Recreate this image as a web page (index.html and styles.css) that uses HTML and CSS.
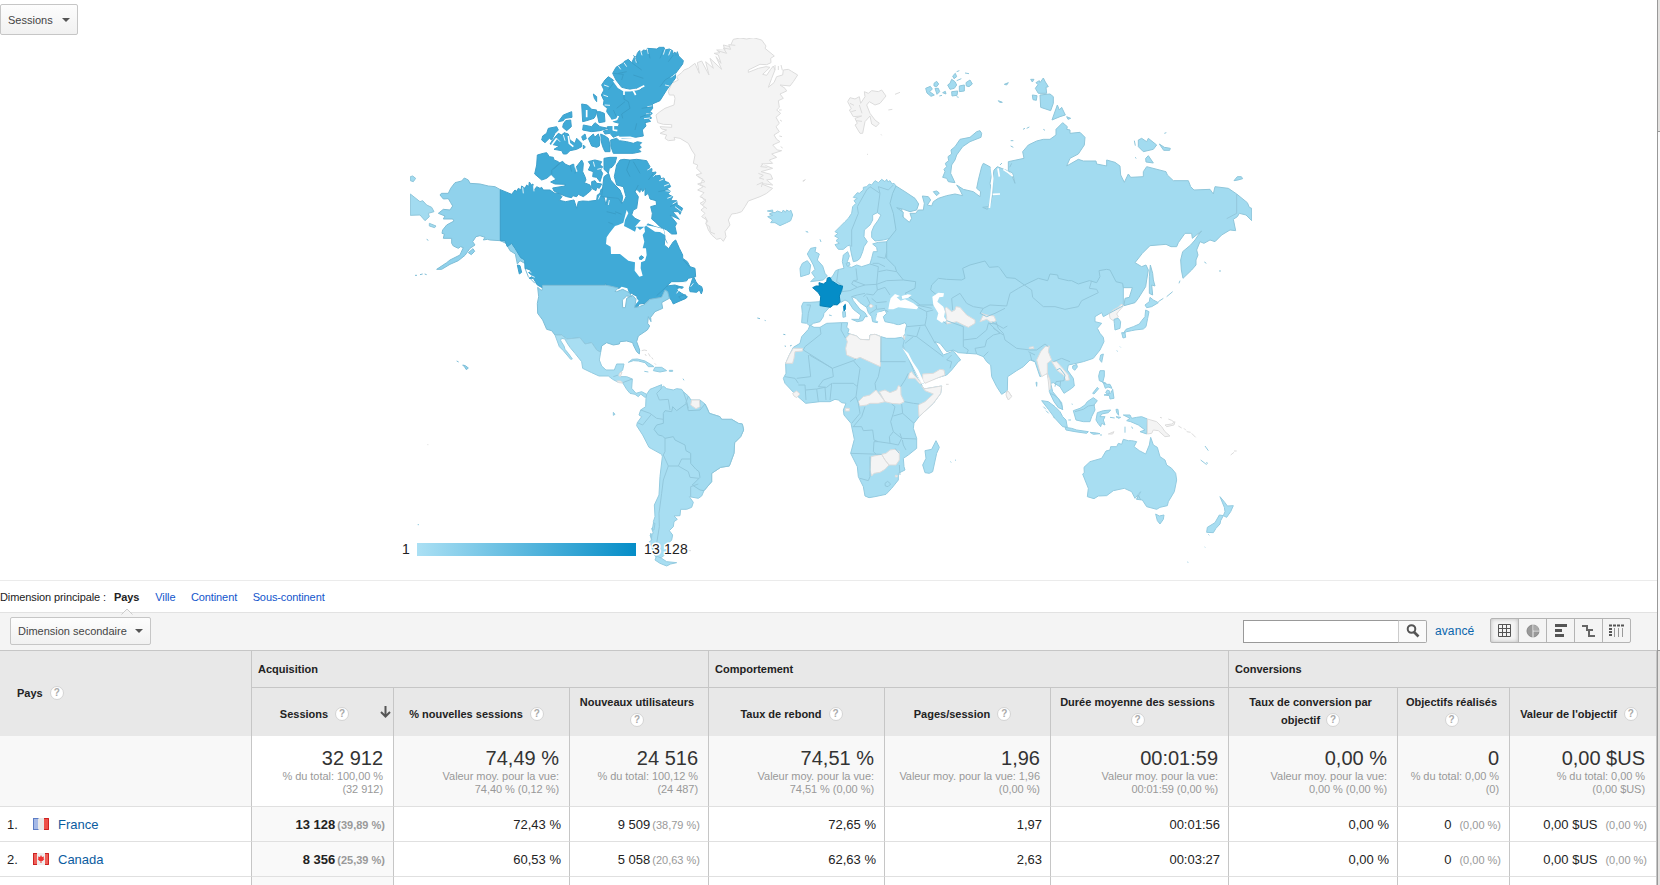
FILE: index.html
```html
<!DOCTYPE html>
<html lang="fr">
<head>
<meta charset="utf-8">
<title>Pays</title>
<link rel="stylesheet" href="styles.css">
</head>
<body>
<div class="page">
<main class="report">
<section class="map-panel">
<svg class="map" width="1657" height="580" viewBox="0 0 1657 580">
<defs>
<linearGradient id="scale"><stop offset="0" stop-color="#abe0f4"/><stop offset="1" stop-color="#058dc7"/></linearGradient>
<clipPath id="frame"><rect x="410" y="38" width="842" height="530"/></clipPath>
</defs>
<g clip-path="url(#frame)">
<!-- North America (north) and Greenland -->
<g transform="translate(400 30) scale(.33333)">
<path class="none" d="M1000,28L1020,24 1040,27 1060,23 1085,30 1098,48 1095,55 1123,78 1112,85 1113,98 1100,104 1080,103 1045,120 1045,127 1075,115 1098,110 1110,112 1088,133 1100,136 1112,118 1120,108 1125,120 1115,145 1105,172 1122,158 1130,140 1148,135 1150,120 1165,118 1175,124 1193,135 1180,155 1170,168 1140,165 1155,175 1160,183 1140,192 1150,205 1135,212 1138,232 1130,240 1142,250 1128,262 1138,280 1128,290 1138,305 1122,315 1130,328 1140,335 1118,345 1132,360 1145,362 1115,372 1130,382 1108,390 1118,400 1085,402 1118,415 1083,425 1112,433 1118,447 1100,450 1118,465 1080,460 1118,475 1100,490 1080,500 1045,513 1035,530 1025,545 1010,550 995,552 985,570 990,585 975,605 978,620 970,634 962,625 950,628 935,615 925,600 918,580 920,570 905,560 915,550 903,540 915,530 900,520 918,510 900,500 912,488 893,480 910,470 893,462 915,455 888,435 905,430 890,415 893,405 880,400 885,375 875,360 865,340 840,325 822,322 825,330 805,332 795,325 800,315 780,310 800,300 785,297 780,290 815,292 815,284 790,283 773,278 768,255 780,245 795,235 822,225 825,205 822,195 808,195 805,185 815,160 835,150 830,140 845,128 852,120 865,115 885,100 898,130 892,98 905,93 927,135 917,95 940,115 930,85 965,118 948,80 963,100 955,75 942,70 960,68 950,60 975,60 970,45 990,50Z"/>
<path class="none thin" d="M1137,240l8,0M1140,270l6,4M1138,318l8,2M1142,350l6,4M1125,105v15M1135,108v12M1143,105l4,16M1210,455l6,-6M952,62l28,8 -10,-16 22,4 -6,-14 20,2M1090,400l-8,10 20,2M1075,430l15,6 -12,8 14,4M1070,465l18,-8 -4,14M905,500l12,14 -10,12 14,10M915,560l8,14 -6,8 12,8 2,16 14,6M895,440l14,8 -8,16 16,8"/>
<path class="us" d="M301,479L285,470 265,468 240,462 210,460 205,450 193,444 185,453 165,458 152,475 145,490 124,490 120,495 130,507 145,506 152,518 158,528 150,540 130,538 115,550 135,558 130,567 158,567 162,573 140,585 128,600 126,610 133,612 130,625 155,625 155,640 160,648 175,655 182,650 190,653 183,668 180,675 150,690 140,698 110,718 125,718 150,703 175,692 195,676 210,655 225,645 218,635 228,620 240,617 255,622 250,630 262,628 270,630 300,632 318,632 322,648 335,638 342,650 362,672 363,683 375,684 374,700 360,692 352,702 346,672 330,662 318,640 301,632Z"/>
<path class="us thin" d="M205,668l14,-12 5,8 -10,10zM45,736l6,0M60,734l8,-2M74,732l6,2M80,628l5,3"/>
<path class="ru" d="M31,492L60,515 68,512 80,525 95,532 102,545 85,550 88,560 75,572 60,555 31,556ZM31,440L38,438 47,445 40,455 31,452ZM88,580L108,588 104,593 88,588Z"/>
<path class="ca" d="M301,479L335,493 345,480 350,484 355,475 363,480 365,468 375,475 380,465 386,470 388,456 394,465 399,462 402,482 410,470 420,475 425,472 430,480 450,480 463,489 478,491 486,500 478,511 497,515 522,510 530,535 535,515 548,513 565,514 590,511 592,495 600,490 603,478 610,475 612,500 618,525 625,490 640,498 655,490 665,520 671,515 678,500 670,470 650,465 643,440 650,405 660,390 672,388 690,390 710,388 740,392 750,410 745,417 756,416 755,428 768,426 765,438 780,436 782,446 792,444 795,454 806,458 812,470 800,476 812,484 803,492 818,500 812,512 830,512 832,524 848,535 840,553 835,545 818,545 838,568 810,555 830,580 825,590 830,612 815,612 800,600 780,590 765,575 755,567 757,550 752,530 770,525 768,512 750,507 745,490 735,497 735,475 728,485 722,475 720,487 710,478 705,485 715,500 710,535 700,540 695,555 705,565 720,572 735,578 765,590 790,597 795,620 793,645 806,656 820,635 827,630 838,655 848,675 848,685 862,695 870,710 885,715 887,740 865,745 858,755 815,755 800,768 825,765 838,770 830,780 845,790 862,800 858,805 828,818 820,822 815,812 806,800 803,788 795,780 785,800 770,806 750,806 735,820 718,822 712,832 702,832 706,815 712,800 695,790 685,797 668,780 655,775 664,775 645,772 618,765 617,760 614,766 428,766 430,775 412,765 400,745 388,745 398,738 386,728 392,720 375,715 374,690 362,683 345,655 335,640 322,650 315,632 301,632Z"/>
<path class="sea" d="M680,540L676,555 670,578 655,585 645,588 628,610 620,622 618,642 632,650 633,672 660,672 685,692 705,697 704,722 718,740 728,737 722,715 723,697 735,692 740,675 738,655 728,655 733,635 728,615 735,605 733,590 720,600 710,590 705,605 690,597 672,588 675,570 685,550Z"/>
<path class="sea" d="M645,794L650,782 665,770 682,775 686,787ZM668,830L668,808 676,797 700,797 690,804 682,803 677,815 676,832ZM695,800L706,800 716,812 705,825ZM735,585L765,590 790,597 795,615 780,606 765,605ZM705,590L725,568 745,578 735,590Z"/>
<path class="ca" d="M868,775L878,745 882,742 888,755 895,765 905,770 908,780 904,792 898,780 890,787 870,785ZM836,800l20,-6 3,10 -15,6zM718,682l6,-5 7,5 -5,6 -7,0zM352,705l8,2 5,20 -7,5zM830,768l20,3 -3,4 -16,-2z"/>
<path class="ca" d="M638,130L648,112 668,100 672,95 685,88 695,98 705,78 708,84 712,70 718,62 726,66 730,60 740,62 742,55 770,57 778,52 792,52 795,60 808,57 818,62 818,72 825,66 828,76 832,65 836,78 850,92 848,102 827,130 826,145 800,180 780,212 757,222 758,235 750,245 757,250 748,258 755,264 745,268 752,274 735,278 738,288 727,300 730,318 700,323 665,325 655,315 640,322 630,310 615,312 610,303 625,300 622,290 655,290 658,280 640,275 632,262 620,245 622,235 610,225 612,212 604,195 612,180 605,165 615,150 625,140 640,150 655,175 672,182 690,183 720,180 732,168 715,175 690,178 665,172 648,150Z"/>
<path class="ca" d="M632,330L650,325 658,332 680,335 700,340 712,335 725,338 718,345 724,352 716,358 723,365 700,370 640,370 633,350ZM412,375L430,370 440,368 448,380 460,382 462,390 475,395 480,400 455,420 455,432 440,445 425,450 404,432 410,405ZM480,398L488,394 495,402 508,408 520,402 528,412 545,390 550,400 548,425 555,440 558,450 553,458 570,465 574,480 563,490 550,500 535,493 530,500 518,497 515,503 500,500 480,492 462,483 458,474 495,468 495,463 465,462 452,456 468,448 455,435 455,420ZM565,395L575,392 585,390 605,395 600,405 608,410 602,420 608,430 600,455 590,442 578,440 580,425 565,420 572,405ZM612,385L630,382 650,382 645,400 636,412 628,415 625,430 612,418ZM575,455L585,452 590,460 605,462 598,475 590,472 588,482 575,475ZM612,440L626,430 632,450 648,468 660,480 668,500 665,520 655,505 605,500 608,470Z"/>
<path class="ca" d="M450,342L458,330 475,310 485,315 492,308 505,312 510,330 525,340 530,325 545,340 545,350 530,358 510,362 500,372 490,372 485,362 462,358 478,348ZM425,330L428,318 440,310 445,295 470,290 475,300 465,310 455,330 448,325 435,338ZM475,275L490,255 515,245 516,262 495,265 490,272ZM490,282L497,272 512,270 514,290 500,302 488,292ZM545,222L562,225 575,238 590,240 588,255 582,265 560,272 548,275ZM590,245L600,245 613,250 615,275 597,278ZM548,300L550,285 575,290 585,278 600,290 625,295 600,302 575,305ZM565,325L580,312 584,322 595,312 600,328 598,348 590,352 575,348ZM602,312L615,318 625,325 630,345 630,365 615,365 610,355 605,340ZM580,192L590,200 590,215 583,205ZM545,320l10,-8 4,14 -10,5zM550,345l6,6 -6,6z"/>
<path class="sea-line" d="M641,152L655,172 672,182 690,182 712,178 733,167M700,182L707,195M672,182V195M455,345L470,325M505,318L508,340 520,350M625,275L650,268 655,258M640,285V300L652,302M655,323L690,322 722,330M560,240V262M525,405L530,425"/>
<path class="nick" d="M705,80L709,98M722,62L726,76M742,56L745,72M795,58L790,74M812,60L806,76M655,108L662,118M672,98L680,110M827,132L812,142M808,168L795,165M610,195L624,200M612,165L626,170M614,225L630,226M757,228L742,230M752,250L738,252M750,264L732,266M752,415L742,420M770,430L760,440M790,447L778,452M808,462L792,468M812,484L796,482M815,500L802,505M830,515L818,522M845,545L825,530M370,490L368,472M402,484L400,466M580,395L584,410M605,415L592,418M575,495L580,510M570,500L556,508M595,508L600,496M628,510L625,525M490,315L495,332M470,325L480,335M860,755L838,760M880,760L872,770M840,775L830,790M395,738L404,742M385,722L394,728"/>
<path class="ca-line" d="M640,130L670,133 665,150M655,130L680,125M695,98L725,120M700,135L730,145M672,195V208L685,215 690,235 665,252 668,265M820,135L795,150 780,170M675,215L650,235M757,230L725,235M750,250L720,262M690,390L680,420 690,440M705,485L715,465M770,797L805,765M620,545L648,552M625,577L640,583M645,545L665,553M700,395L720,430M760,430L745,450M800,480L775,485M830,520L810,530M530,408L525,430M510,405L515,425M480,400L460,418M640,160L625,180M700,75L715,100M745,60L750,85M790,60L780,85M820,75L805,95M710,280L705,300M640,240L650,262M795,625L802,640M850,690L870,712M375,715L385,740 405,760"/>
<path class="lt" d="M1102,543L1118,540 1118,548 1108,552 1118,556 1103,560 1118,570 1112,578 1125,578 1140,587 1160,578 1172,572 1178,555 1172,540 1168,545 1160,540 1156,547 1150,540 1146,548 1132,543 1125,548Z"/>
<path class="lt thin" d="M1220,603l4,4"/>
</g>
<!-- Central and South America -->
<g transform="translate(400 260) scale(.33333)">
<path class="us" d="M428,76L618,76 630,78 655,84 645,94 650,95 668,88 688,98 695,110 680,108 667,120 668,143 676,143 680,115 698,106 708,118 704,143 718,140 735,133 750,118 785,112 795,90 803,95 808,115 795,122 785,128 788,145 765,155 752,172 753,185 745,170 743,190 749,198 742,210 715,228 710,245 719,270 718,282 710,275 700,255 698,248 680,243 660,245 658,252 640,255 620,248 605,258 602,277 590,270 575,248 555,252 540,233 500,237 485,225 465,225 455,212 440,208 428,180 413,160 412,130 416,110 413,82 425,92 427,85Z"/>
<path class="us" d="M188,315l8,2 9,7 -6,5 -5,-8zM170,303l6,3"/>
<path class="lt" d="M465,225L485,225 500,237 540,233 555,252 575,248 590,270 602,277 598,300 605,318 618,330 643,330 650,312 672,312 668,330 658,340 660,350 680,350 697,357 695,385 708,400 725,395 740,403 748,408 735,412 722,402 715,410 705,403 690,400 680,388 668,368 655,367 638,358 625,348 597,348 575,338 548,325 545,305 525,280 510,262 500,247 495,237 484,235 482,242 492,258 495,268 505,280 517,297 512,298 490,272 478,260Z"/>
<path class="none" d="M660,338l6,-2 -5,14 -5,-4zM650,363l12,0 6,6 -12,-1z"/>
<path class="lt" d="M685,307L697,298 712,297 735,303 750,312 762,320 745,320 735,308 715,303 700,302ZM765,322L785,322 800,332 780,336 760,332ZM808,331l10,0 0,3 -10,0zM733,334l12,2M849,356l3,5M640,457l5,6 -5,3z"/>
<path class="none thin" d="M725,272l8,-2 8,2 M735,282l4,6M745,280l6,10M755,292l4,6M764,310l4,4M22,576l8,-3M82,554l3,0M865,872l8,0"/>
<path class="lt" d="M740,403L750,388 765,382 780,376 785,374 783,385 790,378 800,386 820,390 830,386 845,388 850,395 865,408 873,420 900,420 915,432 922,445 928,460 960,470 965,478 995,478 1015,490 1027,492 1031,510 1022,530 1004,548 1002,580 988,618 962,622 935,640 935,665 912,692 905,708 895,715 868,710 880,727 875,742 860,748 842,748 840,767 822,768 832,778 822,785 820,800 808,812 818,825 815,840 800,855 800,880 785,892 770,895 760,880 755,860 748,845 756,840 750,825 760,820 755,805 762,800 760,785 765,770 763,735 777,705 780,650 787,590 785,583 747,562 728,525 710,497 712,488 725,470 717,465 722,450 737,440 738,415Z"/>
<path class="br" d="M818,440L830,452 860,430 865,452 900,450 915,432 928,460 960,470 965,478 995,478 1015,490 1027,492 1031,510 1022,530 1004,548 1002,580 988,618 962,622 935,640 935,665 912,692 900,690 877,675 900,652 897,635 888,628 872,610 872,580 858,572 855,555 825,540 820,530 795,535 787,528 775,525 762,508 770,495 790,490 790,460 795,452 815,455Z"/>
<path class="line" d="M785,385L770,400 778,420 805,418 810,450M850,395L860,425 865,445M722,450L750,460 770,475 790,478M712,488L728,495 755,462M795,535L795,575 790,585 805,618 835,618 845,597 870,597M805,618L790,660 785,700 777,760 778,800 770,850M835,618L865,635 870,652 897,655M872,710L872,680 895,672M865,408L857,430M640,350L655,345M668,368L697,357M900,420V445"/>
<path class="none" d="M875,420L898,420 900,440 888,446 872,435Z"/>
<path class="lt" d="M770,888L785,895 800,905 830,908 812,912 800,918 780,910 765,900ZM760,790l5,0 -3,20 -5,0zM752,820l4,4 -2,15zM53,794l4,0"/>
<path class="us thin" d="M1072,174l8,2M1094,181l3,1M1150,223l6,1M1154,258l4,1M1170,258l5,-2"/>
</g>
<!-- Europe and Asia -->
<g transform="translate(770 50) scale(.33333)">
<path class="lt" d="M378,408L372,400 366,402 360,392 354,396 350,388 345,395 335,388 325,398 315,392 305,405 298,402 290,410 280,412 280,420 268,430 262,428 250,442 262,445 252,452 258,460 248,470 245,490 235,505 225,515 210,530 195,545 204,550 194,558 206,565 198,572 208,580 195,584 205,598 220,598 232,588 240,585 242,600 245,615 250,635 262,632 270,625 278,605 282,590 292,575 282,560 283,540 300,525 308,510 308,495 322,488 333,495 325,510 312,528 305,545 305,562 315,573 340,570 360,565 378,550 400,500Z"/>
<path class="lt" d="M355,575L325,577 308,582 320,592 322,605 310,605 305,625 300,642 275,650 260,645 245,652 235,650 232,635 238,618 233,605 220,615 217,635 222,655 208,658 197,662 190,675 180,688 165,700 150,755 120,757 100,757 95,768 97,790 95,818 110,820 120,828 130,820 150,815 160,800 162,790 180,770 208,760 225,750 235,755 250,778 272,795 268,808 245,808 262,815 278,812 285,800 292,800 285,788 270,778 250,752 245,740 258,745 270,758 290,772 295,788 305,800 308,815 322,818 325,810 318,795 330,785 345,780 350,790 340,800 345,815 370,820 385,825 405,818 410,825 405,845 400,862 395,880 403,895 415,925 430,955 445,980 458,1000 480,990 530,975 545,960 565,935 572,930 548,900 545,905 520,915 495,875 510,880 530,905 550,900 565,908 620,912 640,920 650,935 662,945 665,980 680,1010 695,1033 712,1022 713,980 740,962 760,950 780,930 795,935 810,980 830,968 838,995 838,1025 855,1055 878,1080 875,1058 848,1025 842,1000 850,998 870,1010 882,1030 905,1015 913,1008 910,985 892,960 895,945 910,942 940,935 970,925 990,900 1002,875 1000,862 990,850 982,835 995,820 975,815 975,800 995,788 1000,800 1018,790 1060,765 1060,640 700,600 400,560Z"/>
<path class="ru" d="M378,408L405,425 435,445 446,462 440,480 420,485 400,478 380,473 400,487 398,500 418,517 425,505 420,490 437,490 445,480 460,480 463,460 457,438 475,440 482,450 472,465 485,468 490,455 505,445 530,437 555,432 578,437 570,420 560,405 580,418 610,425 630,440 632,425 620,415 625,390 635,350 640,340 650,345 662,352 665,375 660,400 667,430 662,460 652,478 638,472 655,470 668,435 668,385 672,360 682,350 712,362 725,375 735,400 728,370 715,362 715,335 762,325 758,305 775,285 800,273 820,268 840,268 858,255 858,238 878,218 892,230 890,238 900,240 900,250 930,247 945,262 943,285 925,312 900,325 890,348 925,328 940,333 978,333 980,342 1010,348 1010,330 1035,337 1050,348 1052,375 1063,397 1075,372 1082,382 1120,380 1120,365 1130,350 1188,365 1192,375 1210,392 1255,392 1262,410 1272,420 1320,418 1330,432 1335,410 1375,415 1400,432 1432,458 1438,472 1445,475 1445,512 1428,495 1408,490 1402,500 1390,508 1397,542 1380,540 1355,555 1335,575 1320,570 1302,580 1290,575 1280,600 1284,615 1278,630 1278,645 1265,660 1239,685 1234,660 1232,630 1238,605 1262,585 1275,570 1285,555 1295,543 1288,548 1267,565 1265,550 1245,550 1225,578 1220,590 1203,590 1188,583 1140,587 1117,610 1095,638 1115,650 1128,645 1135,660 1130,690 1127,710 1105,745 1095,758 1062,767 1065,745 1078,742 1087,713 1060,713 1058,700 1038,695 1020,660 1010,658 987,662 990,680 980,698 958,692 925,702 905,692 895,692 865,685 863,675 840,672 833,692 805,685 763,705 735,685 710,683 690,655 685,650 658,652 645,633 600,645 578,655 585,685 575,690 530,688 505,685 485,705 482,720 500,735 490,745 495,765 450,765 430,750 415,740 405,730 435,715 437,695 400,690 380,665 375,650 350,625 350,610 350,575 378,540 370,490 360,460 368,430Z"/>
<path class="sea-line" d="M664,352L668,385 664,430 658,474M668,433L690,432M684,355L688,380M700,358L715,368 728,378"/>
<path class="ru" d="M630,242L635,250 633,262 600,275 578,290 560,315 555,330 545,345 542,370 555,398 535,395 530,385 518,382 525,365 522,358 530,350 526,340 536,332 534,320 545,312 543,300 555,290 570,268 600,262 620,245ZM467,115l14,-6 6,8 -8,8 14,10 -10,4 -12,-10zM492,100l8,-6 6,8 -6,8 -8,-2zM495,115l10,0 4,10 -8,8zM508,138l8,-2M518,128l8,-4 2,8zM533,105L540,100 545,88 555,95 560,105 553,115 540,118ZM548,78l8,-8 4,10 -8,6zM560,65l8,-3M560,92l14,-6M568,108l15,-3 0,18 -15,2zM588,98l12,-8 7,12 -10,8 -8,-2zM545,125l18,-2 -2,13 -15,2zM585,69l12,2M560,140l6,2M703,103l12,-5 -5,7zM685,152l12,5 -8,0zM490,425l10,-2 8,6 -8,8zM796,115L804,104 798,98 808,92 810,98 820,84 826,96 835,110 828,112 830,130 805,130ZM810,135L840,132 850,140 850,160 842,182 812,172ZM787,135l14,2 -2,14 -10,-2zM846,210L862,165 868,180 875,172 886,195 870,200ZM782,88l10,0 -5,8zM890,200l12,5 -8,3zM1105,270L1115,265 1130,275 1135,265 1160,285 1150,298 1120,305 1105,290ZM1168,282l15,10 18,3 -2,6 -18,0zM1127,325l8,-8 15,22 -22,-3zM1392,392l10,-12 12,0 4,6 -14,4zM1141,645L1148,670 1150,690 1155,708 1145,705 1148,735 1138,730 1138,680ZM1093,272l3,15M1303,636l6,4M1347,663l6,0M770,235l8,-4M765,235l-6,3M722,272l8,0M722,288l8,4M1183,250l6,-2M1095,322l4,3M820,238l5,3M725,340l-6,12M690,345l6,-6"/>
<path class="none" d="M233,155L240,143 255,147 268,140 272,160 285,140 283,125 295,130 305,122 325,125 335,120 348,138 330,160 315,165 298,155 290,165 300,190 315,210 328,220 318,230 305,222 300,198 285,215 278,250 270,250 255,225 262,220 255,205 275,198 250,200 238,180 244,176ZM240,160l12,6M244,185l14,-4M268,165l8,25M258,212l18,2M355,180l12,-2M375,133l15,-6M333,253l2,3M98,393l8,-4M291,313l3,0"/>
<path class="lt" d="M112,612L122,595 138,592 135,605 148,612 142,630 158,648 165,670 172,678 160,690 122,695 135,682 125,668 135,658 130,645 122,630ZM90,655L97,640 112,632 122,645 118,672 92,680ZM107,544l6,3M150,568l3,8M177,795l8,2M218,785l8,0 1,15 -8,2zM228,640l10,-3 2,8 -8,4z"/>
<path class="fr" d="M172,684L180,682 185,692 205,705 218,708 215,722 208,738 210,755 202,765 190,763 182,772 150,767 152,740 145,728 128,713 138,708 148,708 147,698 160,702 170,695ZM221,768l5,-5 0,15 -4,5z"/>
<path class="sea" d="M355,778L358,760 362,745 375,732 390,738 380,742 392,752 405,748 430,760 445,772 440,778 410,775 385,772 370,778ZM395,738l18,-5 12,2 -10,8 -18,4zM487,740L505,728 522,730 520,740 508,742 502,755 520,770 525,785 522,800 530,812 515,818 500,808 505,790 490,765ZM318,825L345,828 400,825 405,850 395,865 320,850ZM322,788l10,-3 8,8 -8,5 -5,18 -10,-5z"/>
<path class="none" d="M525,775L530,772 545,785 555,780 558,770 570,772 590,795 615,810 615,820 595,832 580,825 560,815 530,822 530,800ZM630,815L640,795 635,790 648,795 672,798 678,812 665,818 650,808ZM302,762l8,6 -7,6 -6,-6zM458,972L490,970 510,958 522,960 525,975 500,985 465,1000 458,990ZM712,1022l12,15 -8,12 -6,-8zM1018,790L1030,780 1045,772 1055,762 1060,768 1045,785 1040,792 1045,800 1030,812 1020,805ZM800,930L812,905 825,890 838,888 835,905 845,930 832,940 832,970 815,980 808,960ZM845,935L860,935 878,955 882,960 895,975 898,990 888,992 880,975 862,962ZM832,970L840,990 842,1015 838,1020ZM778,892l12,-2 2,5 -14,2zM400,855l5,5 -3,10z"/>
<path class="line" d="M245,590L245,540 265,490 262,470 290,420 300,410 330,430 322,488M330,430L325,410 355,420 370,405M205,658L200,695 215,705M258,655L262,690 250,692 285,705 320,703 325,650 300,642M250,692L245,702 262,712 285,705M320,703L322,720 310,735 290,732 280,740M322,720L345,712 360,735M325,665L350,660 380,665M320,703L350,692 400,690M322,620L345,625 350,605M308,640L325,640 345,650M215,725L240,722 262,712M245,740L262,735 285,730M290,740L300,760 290,772M305,745L320,758 350,755M318,765L320,778 345,775M300,790L318,778M345,780L355,785M110,765L122,765 115,790 112,818M445,772L470,785 470,800 465,825 410,830M470,785L490,780M440,765L485,775M465,825L490,870 495,880M410,855L440,860 450,830M405,880L430,860M520,815L530,822M530,812L580,830 580,890 595,900 590,912M580,870L620,865 650,840 655,820 680,822M620,912L615,895 645,890 650,870 670,855 690,850M545,745L548,780M545,745L570,730 590,760 610,770 640,775M640,775L660,765 710,768 720,730 745,715 763,705M640,775L630,790 650,800 675,790 705,775M678,815L685,835 700,850 705,870 740,895 780,900M763,705L785,720 788,742 820,770 855,770 885,778 925,770 935,752 960,740 985,728 980,718 958,715 965,692M780,900L800,900 825,882 835,890M780,910L785,930 795,935M775,905L795,915M640,920L655,905M850,935L875,925 900,935M860,960L870,955 885,975 882,992 858,995 855,1010M870,1010L872,992M1018,790L1060,767M545,915L530,930 545,935 540,955M440,860L520,920"/>
<path class="line" d="M655,818L690,850M665,815L700,835 712,828M670,835L700,855M1400,432V490L1370,506"/>
</g>
<!-- Africa -->
<g transform="translate(770 240) scale(.33333)">
<path class="lt" d="M120,255L132,262 150,262 170,250 215,248 233,248 230,262 237,268 233,280 260,288 270,298 298,300 300,285 315,283 333,290 350,295 375,295 395,292 403,300 398,320 415,355 430,390 440,410 455,435 462,447 515,438 512,460 490,490 447,530 432,550 430,565 440,595 440,625 415,645 400,655 402,680 405,690 385,700 385,720 365,745 348,763 315,770 297,773 285,768 280,740 265,710 262,680 242,640 253,598 243,550 222,525 220,510 228,490 215,488 205,480 195,478 180,485 150,485 107,490 75,462 45,430 40,415 48,400 47,370 58,345 70,322 90,310 95,290 115,268Z"/>
<path class="none" d="M70,325L98,325 98,333 75,335 72,355 68,370 47,370 58,345ZM240,282L260,288 270,298 298,300 300,285 315,283 333,290 331,380 270,352 258,357 230,345 227,325 232,305 228,295ZM265,485L280,470 300,465 318,450 330,465 345,485 325,490 300,490 290,495 270,498ZM328,455L345,450 360,458 380,450 385,437 392,440 393,465 403,485 390,492 365,490 345,485ZM418,400L425,395 432,405 455,430 450,432 435,415 415,415ZM455,437L462,447 515,438 512,460 490,490 447,530 445,495 465,485 490,462 465,452ZM68,460L80,453 90,462 80,473 72,468ZM226,505l12,0 0,8 -12,0zM303,650L312,648 335,643 345,660 357,675 345,688 330,697 312,700 305,708 300,690ZM335,643L348,640 360,630 375,628 388,635 388,660 378,675 357,675 345,660ZM376,706l6,0 0,5 -6,0zM528,433l8,0"/>
<path class="sea" d="M397,323L415,340 428,365 445,390 455,412 463,430 455,430 440,402 425,372 410,345Z"/>
<path class="line" d="M150,262L153,282 105,320 100,330 187,385 250,362 258,357M215,248L213,270 227,295M115,345L122,410 80,415M118,345L187,385 190,410 160,420 145,440 170,442 185,430M187,430L250,430 262,440 258,470 240,485M250,362L270,385 262,440M331,380L325,410 315,430 318,450M331,365H407M333,290V365M45,410L75,415 85,430M85,435L105,435 108,480M108,450L140,447 145,485M140,447L165,442 168,480M185,430L180,480M392,440L405,420 415,400M403,485L430,490 447,492M258,470L265,490 270,520 245,550M285,500L275,530 250,560M248,560L275,560 280,572 308,570 312,600 325,605M365,492L375,500 370,520 362,545 370,575 358,590 360,610 325,605 312,605 310,635 318,642M242,640L335,643M395,492L398,520 370,528M398,520L432,550M370,575L395,595 440,597M360,610L385,615 395,595 390,580M388,640L375,625M300,650V710L295,722 270,715M388,675L390,705M345,730l8,-6 9,8 -8,8 -8,-2zM397,600L400,615 408,630"/>
<path class="lt" d="M498,602L508,622 500,640 488,695 478,700 465,698 458,675 468,655 465,632 485,628ZM541,665l3,2M555,660l3,1"/>
</g>
<!-- South-east Asia and Oceania -->
<g transform="translate(980 250) scale(.33333)">
<path class="lt" d="M497,180L507,185 503,205 498,230 490,237 465,240 455,242 440,245 430,250 438,238 460,230 478,222 485,212 495,200ZM425,248l10,0 2,14 -8,2zM495,165L508,155 510,142 520,150 535,158 515,170 500,173ZM402,208L415,205 422,215 420,235 405,240 403,220ZM362,315l8,-3 -5,25 -6,-8zM278,348l12,-5 2,8 -8,10 -6,-6zM410,302l3,2M420,290l2,2"/>
<path class="line" d="M535,155L550,145M560,140L578,125M597,100l3,-8"/>
<path class="lt" d="M360,362L373,362 373,378 368,398 378,400 358,392 356,378ZM370,398l12,5 8,0 6,12 -12,-4 -8,4zM382,420l8,4 -5,10 -8,-6zM372,435L392,430 398,418 402,445 390,447 388,437ZM338,430L352,412 356,416 342,432ZM168,397l3,0 -1,12zM185,452L205,455 225,470 240,485 248,500 258,510 262,532 248,530 225,505 205,478ZM255,532L275,535 290,540 325,545 320,550 285,545 258,540ZM330,547l20,2 10,2 -20,2zM360,555l6,0M280,482L300,475 315,465 322,455 340,443 352,452 342,465 345,480 335,500 330,515 310,515 288,510ZM352,488L370,482 392,480 385,488 365,492 360,500 375,500 370,510 375,525 365,520 362,530 354,520 348,510ZM408,478l6,0 2,18 -6,-8zM390,502l14,2M408,500l14,2 -6,3zM435,530v18M455,530l3,6M430,495L450,495 455,505 470,502 485,500 502,507 500,552 480,545 495,540 475,525 452,515 440,512 450,505ZM210,430L222,435 235,445 245,465 248,478 235,473 222,455ZM190,470l8,8M198,482l8,8M220,500l4,5M275,462l3,1M265,510l8,0"/>
<path class="none" d="M502,507L530,515 545,530 555,545 570,558 555,560 535,542 520,540 515,550 502,552ZM555,525L575,522 585,515 582,525 560,530ZM565,507l10,4 8,6M595,528l10,6M612,535l6,6M620,545l12,2M635,550l12,12M385,552L402,545 398,552ZM752,615l10,-8M762,603l8,0M540,502l6,2M80,425L86,425 95,440 85,450 78,435Z"/>
<path class="lt" d="M312,652L330,635 365,625 378,603 390,600 392,590 410,590 415,580 425,583 430,568 445,572 455,572 470,575 462,590 478,602 497,612 508,585 512,562 520,585 532,592 540,620 555,630 560,645 575,655 587,670 590,690 583,725 565,755 562,767 540,772 530,778 500,770 487,750 470,748 482,725 465,745 455,725 433,715 400,722 380,737 355,738 342,746 322,740 325,715 315,690 308,672 313,668ZM527,792L538,798 552,795 550,808 540,822 532,812ZM720,740L735,758 742,768 760,767 752,785 740,802 730,797 735,785 733,772ZM718,795L730,797 722,812 720,822 708,835 700,848 680,847 682,832 705,818ZM685,853l3,3M674,891l2,1M622,936l3,1M675,588l10,14M662,630l18,14M680,636l2,6"/>
<path class="line" d="M285,485L310,478 325,468 345,465M470,748L475,735 482,750"/>
</g>
</g>
<rect x="417" y="543" width="219" height="13" fill="url(#scale)"/>
<text class="legend" x="402" y="554">1</text>
<text class="legend" x="644" y="554">13 128</text>
</svg>
<button class="btn sessions">Sessions<i class="caret"></i></button>
</section>
<nav class="dims"><span>Dimension principale :</span><b>Pays<svg class="notch" width="12" height="7"><path d="M0.500 6.500L6 1l5.500 5.500" fill="#f4f4f4" stroke="#ccc"/></svg></b><a>Ville</a><a>Continent</a><a>Sous-continent</a></nav>
<div class="toolbar">
<button class="btn">Dimension secondaire<i class="caret"></i></button>
<div class="tools">
<div class="search"><input type="text" aria-label="Recherche"><span class="go"><svg width="16" height="16" viewBox="0 0 16 16"><circle cx="6.500" cy="6" r="3.800" fill="none" stroke="#555" stroke-width="2"/><path d="M9 9l4.500 4.500" stroke="#555" stroke-width="2.600"/></svg></span></div>
<a class="adv">avancé</a>
<div class="views">
<span class="on"><svg width="13" height="13"><path d="M.5.500h12v12H.5zM4.500 0v13M8.500 0v13M0 4.500h13M0 8.500h13" fill="none" stroke="#555"/></svg></span>
<span><svg width="14" height="14"><circle cx="7" cy="7" r="6" fill="#999" stroke="#888"/><path d="M7 0v14M7 7h7" stroke="#eee"/><path d="M7.500 1a6 6 0 0 1 5.500 5.500h-5.500z" fill="#aaa"/></svg></span>
<span><svg width="14" height="13"><path d="M1 0h12v3H1zM1 5h7v3H1zM1 10h9v3H1z" fill="#555"/></svg></span>
<span><svg width="13" height="12"><path d="M0 0h6v4h5v2H8v4h5v2H6V6H4V2H0z" fill="#666"/></svg></span>
<span><svg width="16" height="13"><path d="M0 1.500h16M0 5h3M0 8h3M0 11h3" stroke="#555" stroke-width="2" stroke-dasharray="3 1"/><path d="M5.500 4v9M9.500 4v9M13.500 4v9" stroke="#999"/></svg></span>
</div>
</div>
</div>
<table class="data">
<colgroup><col class="c0"><col class="c1"><col class="c2"><col class="c3"><col class="c4"><col class="c5"><col class="c6"><col class="c7"><col class="c8"><col class="c9"></colgroup>
<thead>
<tr class="groups"><th rowspan="2" class="dim">Pays<i class="q">?</i></th><th colspan="3">Acquisition</th><th colspan="3">Comportement</th><th colspan="3">Conversions</th></tr>
<tr class="cols"><th class="sorted">Sessions<i class="q">?</i><svg class="arrow" width="11" height="12"><path d="M5.500 0v10M1 6l4.500 4.500L10 6" fill="none" stroke="#555" stroke-width="2"/></svg></th><th>% nouvelles sessions<i class="q">?</i></th><th class="two">Nouveaux utilisateurs <i class="q low">?</i></th><th>Taux de rebond<i class="q">?</i></th><th>Pages/session<i class="q">?</i></th><th class="two">Durée moyenne des sessions <i class="q low">?</i></th><th class="two">Taux de conversion par objectif<i class="q mid">?</i></th><th class="two">Objectifs réalisés <i class="q low">?</i></th><th>Valeur de l'objectif<i class="q">?</i></th></tr>
</thead>
<tbody>
<tr class="totals"><td></td><td class="white"><b>32 912</b>% du total: 100,00 %<br>(32 912)</td><td><b>74,49 %</b>Valeur moy. pour la vue:<br>74,40 % (0,12 %)</td><td><b>24 516</b>% du total: 100,12 %<br>(24 487)</td><td><b>74,51 %</b>Valeur moy. pour la vue:<br>74,51 % (0,00 %)</td><td><b>1,96</b>Valeur moy. pour la vue: 1,96<br>(0,00 %)</td><td><b>00:01:59</b>Valeur moy. pour la vue:<br>00:01:59 (0,00 %)</td><td><b>0,00 %</b>Valeur moy. pour la vue:<br>0,00 % (0,00 %)</td><td><b>0</b>% du total: 0,00 %<br>(0)</td><td><b>0,00 $US</b>% du total: 0,00 %<br>(0,00 $US)</td></tr>
<tr class="row"><td><div class="name"><span>1.</span><svg width="16" height="12"><path fill="#a5b9e6" d="M0 0h6v12H0z"/><path fill="#e8e8e8" d="M5 0h6v12H5z"/><path fill="#ee5048" d="M11 0h5v12h-5z"/><path d="M.5.500h5M.5 11.500h5M.5 0v12" stroke="#5c7cc4"/><path d="M11 .5h4.500v11H11" fill="none" stroke="#c22"/></svg><a>France</a></div></td><td class="key">13 128<small>(39,89 %)</small></td><td>72,43 %</td><td>9 509<small>(38,79 %)</small></td><td>72,65 %</td><td>1,97</td><td>00:01:56</td><td>0,00 %</td><td>0<small class="wide">(0,00 %)</small></td><td>0,00 $US<small class="wide">(0,00 %)</small></td></tr>
<tr class="row"><td><div class="name"><span>2.</span><svg width="16" height="12"><path fill="#eee" d="M0 0h16v12H0z"/><path fill="#ee6058" d="M0 0h4v12H0zM12 0h4v12h-4z"/><path d="M0 .5h4M0 11.500h4M.5 0v12M12 .5h3.500v11H12" fill="none" stroke="#c22"/><path fill="#e33" d="M8 2l1 2 2-.5-.5 2 1 .5-2 2H8.500v2h-1V8H6.500l-2-2 1-.5-.5-2 2 .5z"/></svg><a>Canada</a></div></td><td class="key">8 356<small>(25,39 %)</small></td><td>60,53 %</td><td>5 058<small>(20,63 %)</small></td><td>62,63 %</td><td>2,63</td><td>00:03:27</td><td>0,00 %</td><td>0<small class="wide">(0,00 %)</small></td><td>0,00 $US<small class="wide">(0,00 %)</small></td></tr>
<tr class="row"><td></td><td class="key"></td><td></td><td></td><td></td><td></td><td></td><td></td><td></td><td></td></tr>
</tbody>
</table>
</main>
<aside class="edge"><i class="edge-top"></i><i class="edge-mid"></i><i class="edge-low"></i></aside>
</div>
</body>
</html>
```
FILE: styles.css
```css
* { box-sizing: border-box; }
body { margin: 0; background: #fff; font-family: "Liberation Sans", Arial, sans-serif; font-size: 11px; color: #222; }
.page { display: flex; width: 1660px; height: 885px; overflow: hidden; }
.report { width: 1657px; }
a { color: #15c; }

.map-panel { position: relative; height: 580px; }
.map { display: block; }
.map path { stroke-width: 3; stroke-linejoin: round; }
.map .thin { stroke-width: 3; }
.lt { fill: #a8def2; stroke: #94cbe0; }
.ru, .br { fill: #a2dbf0; stroke: #8fc6da; }
.us { fill: #90d2ec; stroke: #7dbdd6; }
.ca { fill: #40aad7; stroke: #3c9fca; }
.fr { fill: #058dc7; stroke: #0580b5; }
.none { fill: #f4f4f4; stroke: #dcdcdc; }
.sea { fill: #fff; stroke: none; }
.sea-line, .nick { fill: none; stroke: #fff; }
.map .sea-line { stroke-width: 5; }
.map .nick { stroke-width: 2.5; }
.line { fill: none; stroke: #94c8dc; }
.ca-line { fill: none; stroke: #3797c0; }
.map .ca-line { stroke-width: 2; }
.legend { font-size: 14px; letter-spacing: 0.2px; fill: #222; stroke: #fff; stroke-width: 3px; paint-order: stroke; }

.btn { display: inline-flex; align-items: center; justify-content: space-between; height: 28px; padding: 0 7px; border: 1px solid #c6c6c6; border-radius: 2px; background: linear-gradient(#fdfdfd, #f1f1f1); font: 11px "Liberation Sans", Arial, sans-serif; color: #444; }
.caret { border: 4px solid transparent; border-top-color: #555; border-bottom: 0; }
.sessions { position: absolute; left: 0; top: 4px; width: 78px; height: 31px; }

.dims { display: flex; align-items: center; height: 33px; border-top: 1px solid #ebebeb; border-bottom: 1px solid #e2e2e2; letter-spacing: -0.1px; }
.dims b { position: relative; margin: 0 16px 0 8px; }
.dims a { margin-right: 15.5px; }
.notch { position: absolute; left: 7px; top: 17px; }
.toolbar { display: flex; align-items: center; justify-content: space-between; height: 37px; padding: 0 26px 2px 10px; background: #f4f4f4; }
.toolbar > .btn { width: 141px; }
.tools { display: flex; align-items: center; }
.search { display: flex; height: 23px; margin-top: 1px; }
.search input { width: 156px; border: 1px solid #999; border-right-color: #ccc; background: #fff; padding: 0 4px; outline: 0; }
.go { display: flex; align-items: center; justify-content: center; width: 28px; border: 1px solid #aaa; border-left: 0; border-radius: 0 2px 2px 0; background: #fafafa; }
.adv { width: 63px; padding-left: 8px; font-size: 12px; letter-spacing: 0.1px; color: #0b66ac; margin-top: 1px; }
.views { display: flex; height: 25px; width: 141px; border: 1px solid #b4b4b4; border-radius: 2px; }
.views span { display: flex; flex: 1; align-items: center; justify-content: center; border-left: 1px solid #b4b4b4; }
.views span:first-child { border-left: 0; box-shadow: inset 0 0 4px #bbb; }

.data { width: 1657px; table-layout: fixed; border-collapse: separate; border-spacing: 0; border-top: 1px solid #c6c6c6; border-right: 1px solid #c6c6c6; }
.c0 { width: 251px; } .c1 { width: 142px; } .c2 { width: 176px; } .c3 { width: 139px; } .c4 { width: 176px; }
.c5 { width: 166px; } .c6 { width: 178px; } .c7 { width: 169px; } .c8 { width: 112px; } .c9 { width: 147px; }
.data th { background: #e8e8e8; padding: 0; font-weight: bold; border-left: 1px solid #c6c6c6; }
.data th.dim { border-left: 0; text-align: left; padding: 0 0 2px 17px; }
.groups th { height: 37px; text-align: left; padding-left: 6px; }
.groups th:not(.dim) { border-bottom: 1px solid #c6c6c6; }
.data .cols th { position: relative; height: 48px; line-height: 18px; padding: 3px 16px 0 6px; }
.data .cols th:nth-child(1) { padding-right: 22px; }
.data .cols th:nth-child(3), .data .cols th:nth-child(6), .data .cols th:nth-child(8) { padding: 0 7px 2px 3px; }
.data .cols th:nth-child(7) { padding: 0 19px 2px 14px; }
.data .cols th:nth-child(9) { padding: 3px 8px 0 0; }
.q { display: inline-block; width: 14px; height: 14px; margin-left: 7px; border: 1px solid #d4d4d4; border-radius: 50%; background: #fff; color: #aaa; font: bold 10px/12px "Liberation Sans", Arial, sans-serif; text-align: center; vertical-align: 1px; }
.low { margin: 0; }
.mid { margin-left: 6px; }
.arrow { position: absolute; right: 2px; top: 18px; }

.data td { border-left: 1px solid #c6c6c6; border-bottom: 1px solid #e0e0e0; text-align: right; padding: 0 8px 0 0; }
.data td:first-child { border-left: 0; }
.totals td { height: 71px; background: #f8f8f8; line-height: 13px; letter-spacing: -0.05px; color: #999; vertical-align: top; }
.data .totals td { padding: 10px 10px 0 0; }
.data .totals .white { background: #fff; }
.totals b { display: block; font-size: 20px; font-weight: normal; letter-spacing: 0; line-height: 24px; color: #333; }
.row td { height: 35px; font-size: 13px; color: #222; white-space: nowrap; }
.data td:last-child { padding-right: 9px; }
.data .totals td:last-child { padding-right: 11px; }
.row small { font-size: 11px; color: #999; margin-left: 2px; }
.row small.wide { margin-left: 8px; }
.data .key { background: #f9f9f9; font-weight: bold; }
.name { display: flex; align-items: center; text-align: left; padding-left: 7px; }
.name span { width: 26px; }
.name a { margin-left: 9px; color: #0b5c9f; }

.edge { display: flex; flex-direction: column; width: 3px; border-left: 1px solid #999; }
.edge-top { height: 132px; background: #e4e2e0; border-bottom: 1px solid #999; }
.edge-mid { height: 519px; background: #fafafa; border-bottom: 1px solid #999; }
.edge-low { flex: 1; background: #e4e2e0; }
```
